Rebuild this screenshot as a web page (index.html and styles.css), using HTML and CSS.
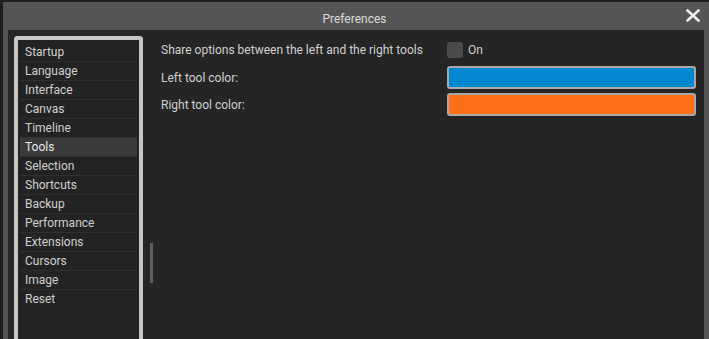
FILE: index.html
```html
<!DOCTYPE html>
<html lang="en">
  <head>
    <meta charset="UTF-8">
    <meta name="viewport" content="width=device-width, initial-scale=1.0">
    <title>Preferences</title>
    <link rel="stylesheet" href="styles.css">
  </head>
  <body>
    <div class="window">
      <div class="title-bar">
        <span class="title">Preferences</span>
        <svg class="close-btn" width="14" height="13" viewBox="0 0 14 13">
          <path d="M1.5 1.5 L12.5 11.5 M12.5 1.5 L1.5 11.5" stroke="#ececec" stroke-width="2.6" stroke-linecap="square"/>
        </svg>
      </div>
      <div class="content">
        <ul class="section-list">
          <li>Startup</li>
          <li>Language</li>
          <li>Interface</li>
          <li>Canvas</li>
          <li>Timeline</li>
          <li class="selected">Tools</li>
          <li>Selection</li>
          <li>Shortcuts</li>
          <li>Backup</li>
          <li>Performance</li>
          <li>Extensions</li>
          <li>Cursors</li>
          <li>Image</li>
          <li>Reset</li>
        </ul>
        <div class="splitter"><div class="splitter-handle"></div></div>
        <div class="options">
          <span class="label first-row">Share options between the left and the right tools</span>
          <label class="check first-row">
            <span class="check-box"></span>
            <span>On</span>
          </label>
          <span class="label">Left tool color:</span>
          <div class="color-swatch swatch-left"></div>
          <span class="label">Right tool color:</span>
          <div class="color-swatch swatch-right"></div>
        </div>
      </div>
    </div>
  </body>
</html>
```

FILE: styles.css
```css
html, body {
    margin: 0;
    padding: 0;
    height: 100%;
    overflow: hidden;
}
body {
    background: #1e1e1e;
    font-family: Roboto, "Noto Sans", sans-serif;
    font-size: 12px;
    color: #d2d2d2;
}
.window {
    margin: 2px 0 0 3px;
    height: calc(100% - 2px);
    background: #555555;
    padding: 0 5px 0 5px;
    display: flex;
    flex-direction: column;
}
.title-bar {
    height: 28px;
    flex-shrink: 0;
    display: flex;
    align-items: center;
    justify-content: center;
    position: relative;
}
.title {
    color: #dcdcdc;
    font-size: 12px;
    margin-left: -3px;
    margin-top: 5px;
}
.close-btn {
    position: absolute;
    right: 4px;
    top: 7px;
}
.content {
    flex: 1;
    background: #252525;
    display: flex;
    min-height: 0;
}
.section-list {
    list-style: none;
    margin: 6px 0 0 6px;
    padding: 3px 2px 0 2px;
    width: 117px;
    border: 4px solid #c6c6c6;
    border-bottom: none;
    border-radius: 4px 4px 0 0;
    background: #232323;
    flex-shrink: 0;
}
.section-list li {
    height: 18px;
    line-height: 18px;
    padding-left: 5px;
    border-bottom: 1px solid #2f2f2f;
    color: #d0d0d0;
}
.section-list li:last-child {
    border-bottom: none;
}
.section-list li.selected {
    background: #3a3a3a;
    color: #e8e8e8;
}
.splitter {
    width: 18px;
    flex-shrink: 0;
    display: flex;
    justify-content: center;
    align-items: flex-start;
}
.splitter-handle {
    width: 3px;
    height: 40px;
    margin-top: 213px;
    margin-left: -1px;
    background: #5e5e5e;
}
.options {
    flex: 1;
    display: grid;
    grid-template-columns: 286px 249px;
    grid-template-rows: 21px 23px 23px;
    row-gap: 4px;
    align-items: center;
    align-content: start;
    padding-top: 11px;
}
.first-row {
    align-self: start;
    height: 18px;
    line-height: 18px;
}
.label {
    color: #d0d0d0;
}
.check {
    display: flex;
    align-items: center;
    gap: 5px;
    color: #d0d0d0;
}
.check-box {
    width: 16px;
    height: 16px;
    border-radius: 3px;
    background: #4a4a4a;
}
.color-swatch {
    height: 19px;
    border: 2px solid #a9a9a9;
    border-radius: 3px;
}
.swatch-left {
    background: #0288d1;
}
.swatch-right {
    background: #ff6f16;
}
```
